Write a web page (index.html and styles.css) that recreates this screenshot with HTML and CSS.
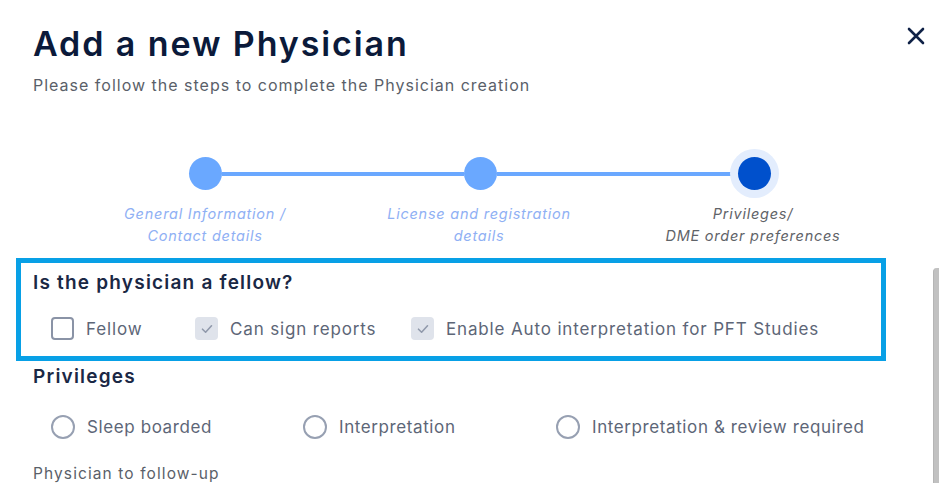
FILE: index.html
```html
<!DOCTYPE html>
<html>
<head>
<meta charset="utf-8">
<link rel="stylesheet" href="styles.css">
</head>
<body>
<div class="dialog">
  <header class="head">
    <div class="titles">
      <h1 class="title">Add a new Physician</h1>
      <p class="subtitle">Please follow the steps to complete the Physician creation</p>
    </div>
    <button class="close" aria-label="Close">
      <svg width="20" height="20" viewBox="0 0 20 20"><path d="M3 3 L17 17 M17 3 L3 17" stroke="#0f2146" stroke-width="2.6" stroke-linecap="round"/></svg>
    </button>
  </header>

  <div class="stepper">
    <div class="track">
      <span class="dot done"></span>
      <span class="bar"></span>
      <span class="dot done"></span>
      <span class="bar"></span>
      <span class="dot current"></span>
    </div>
    <div class="labels">
      <div class="lbl done">General Information /<br>Contact details</div>
      <div class="lbl done">License and registration<br>details</div>
      <div class="lbl current">Privileges/<br>DME order preferences</div>
    </div>
  </div>

  <div class="content">
    <section class="fellow">
      <h2 class="sec">Is the physician a fellow?</h2>
      <div class="opts">
        <label class="opt o1"><span class="box"></span>Fellow</label>
        <label class="opt o2"><span class="box checked"><svg width="14" height="14" viewBox="0 0 14 14"><path d="M2.5 7.2 L5.6 10.2 L11.5 3.8" fill="none" stroke="#9099ab" stroke-width="1.6" stroke-linecap="round" stroke-linejoin="round"/></svg></span>Can sign reports</label>
        <label class="opt"><span class="box checked"><svg width="14" height="14" viewBox="0 0 14 14"><path d="M2.5 7.2 L5.6 10.2 L11.5 3.8" fill="none" stroke="#9099ab" stroke-width="1.6" stroke-linecap="round" stroke-linejoin="round"/></svg></span>Enable Auto interpretation for PFT Studies</label>
      </div>
    </section>
    <section class="priv">
      <h2 class="sec">Privileges</h2>
      <div class="radios">
        <label class="ropt"><span class="radio"></span>Sleep boarded</label>
        <label class="ropt r2"><span class="radio"></span>Interpretation</label>
        <label class="ropt"><span class="radio"></span>Interpretation &amp; review required</label>
      </div>
      <div class="follow">Physician to follow-up</div>
    </section>
  </div>
  <div class="scrollbar"></div>
</div>
</body>
</html>
```

FILE: styles.css
```css
* { box-sizing: border-box; }
html, body { margin: 0; padding: 0; background: #fff; }
body {
  width: 939px; height: 483px; overflow: hidden;
  font-family: Inter, "Noto Sans", "Liberation Sans", sans-serif;
}
.dialog { position: relative; width: 939px; height: 483px; }
.head { display: flex; justify-content: space-between; padding: 22px 13px 0 33px; }
.title {
  margin: 0; font-size: 34px; line-height: 44px; font-weight: 600;
  color: #0b1a3a; letter-spacing: 1.9px;
}
.subtitle { margin: 8px 0 0; font-size: 16px; line-height: 22px; color: #5a5f69; letter-spacing: 1px; }
.close { border: 0; background: none; padding: 0; width: 20px; height: 20px; margin-top: 4px; cursor: pointer; }

.stepper { margin-top: 61px; }
.track { display: flex; align-items: center; padding-left: 189px; width: 771px; }
.dot { width: 33px; height: 33px; border-radius: 50%; flex: none; background: #6aa8ff; }
.dot.current { background: #0050cc; box-shadow: 0 0 0 8px #e3edfd; }
.bar { flex: 1; height: 4px; background: #6aa8ff; }
.labels {
  display: grid; grid-template-columns: repeat(3, 274px);
  margin-left: 68px; margin-top: 13px;
}
.lbl { text-align: center; font-style: italic; font-size: 14.5px; line-height: 22px; letter-spacing: 0.75px; }
.lbl.done { color: #8fb0f4; }
.lbl.current { color: #5f6368; }

.content { margin-top: 11px; }
.fellow {
  margin-left: 16px; width: 870px; height: 103px;
  border: 5px solid #08a0e6; padding: 7px 0 0 12px;
}
.sec { margin: 0; font-size: 19px; line-height: 26px; font-weight: 600; color: #1a2845; letter-spacing: 1.2px; }
.opts { display: flex; margin-top: 21px; padding-left: 18px; }
.opt {
  display: flex; align-items: center; gap: 12px; white-space: nowrap;
  font-size: 17px; color: #5d6677; letter-spacing: 0.85px;
}
.o1 { width: 144px; }
.o2 { width: 216px; }
.box {
  width: 23px; height: 23px; border-radius: 4px; border: 2px solid #8a93a6;
  display: flex; align-items: center; justify-content: center; flex: none;
}
.box.checked { border: 0; background: #dfe3eb; }
.priv { padding-left: 33px; padding-top: 3px; }
.radios { display: flex; margin-top: 25px; padding-left: 18px; }
.ropt {
  display: flex; align-items: center; gap: 12px; white-space: nowrap;
  font-size: 17px; color: #5d6677; width: 252px; letter-spacing: 0.6px;
}
.ropt.r2 { width: 253px; }
.radio { width: 24px; height: 24px; border-radius: 50%; border: 2px solid #97a0b2; flex: none; }
.follow { margin-top: 25px; font-size: 15.5px; color: #5a5f69; letter-spacing: 1.1px; }
.scrollbar {
  position: absolute; left: 933px; top: 268px; width: 8px; height: 230px;
  background: #c1c1c1; border-radius: 4px 0 0 0; border-left: 1px solid #b5b5b5;
}
```
